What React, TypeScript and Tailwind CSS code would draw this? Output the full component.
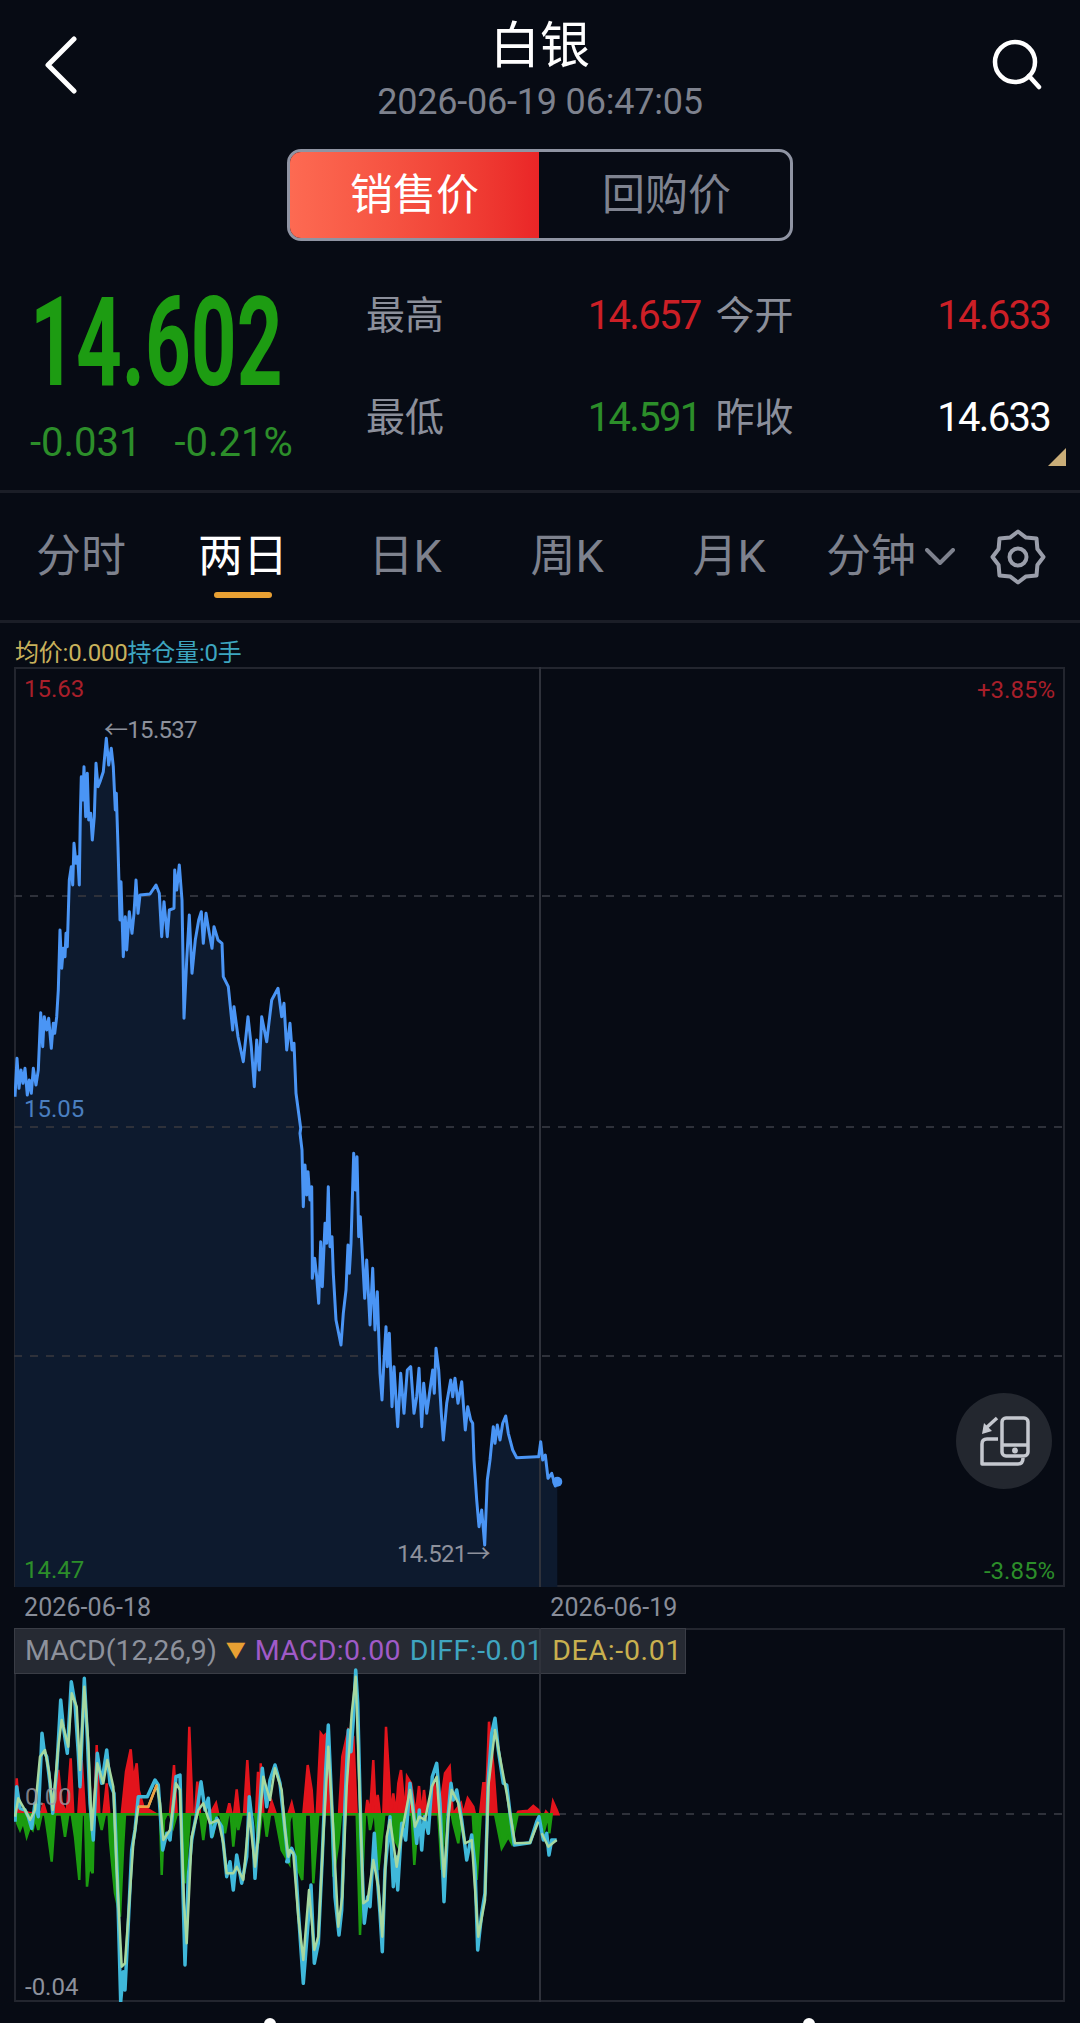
type Pt = [number, number]

// traced from the chart, in 3x crop units, converted to page px below
const toPage = (pts: Pt[], ox: number, oy: number): Pt[] => pts.map(([x, y]) => [ox + x / 3, oy + y / 3])
const str = (pts: Pt[]) => pts.map(([x, y]) => `${x.toFixed(1)},${y.toFixed(1)}`).join(' ')

const priceA: Pt[] = [[15,1100],[21,985],[27,1075],[33,1020],[39,1060],[45,1015],[52,1095],[58,1050],[64,1090],[70,1015],[78,1065],[85,1020],[92,848],[98,950],[103,860],[110,900],[116,865],[124,955],[130,880],[134,910],[140,860],[145,780],[150,600],[155,715],[160,655],[165,680],[168,610],[172,650],[178,450],[184,410],[188,465],[192,340],[198,400],[203,380],[208,465],[211,260],[214,140],[218,210],[222,110],[227,260],[232,130],[236,270],[242,250],[247,330],[253,260],[258,100],[264,170],[270,155],[280,125],[289,25],[296,105],[304,55],[310,110],[316,240],[319,190],[324,350],[330,570],[333,455],[340,680],[346,560],[350,660],[358,545],[366,610],[372,550],[378,450],[384,550],[390,495],[420,492],[438,465],[448,490],[455,620],[462,515],[472,620],[478,540],[492,535],[494,420],[500,480],[508,405],[516,510],[522,865],[530,690],[538,555],[546,730],[556,630],[566,570],[574,545],[580,640],[588,550],[596,600],[606,655],[612,590],[624,630],[636,640],[640,740],[655,770],[668,900],[672,830],[684,920],[700,995],[714,860],[724,950],[733,1070],[740,930],[748,1020],[755,860],[770,935],[785,810],[804,775],[815,860],[822,820],[830,960],[840,880],[846,960],[852,940],[858,1090],[872,1195]]
const priceB: Pt[] = [[60,10],[66,60],[70,230],[75,105],[80,195],[84,125],[90,210],[95,170],[97,355],[97,445],[104,385],[110,440],[116,520],[122,335],[127,470],[135,280],[140,340],[145,170],[150,350],[156,320],[160,430],[168,570],[183,645],[190,550],[198,480],[204,345],[208,430],[213,340],[221,70],[226,180],[231,80],[236,320],[241,260],[247,370],[254,505],[260,390],[270,585],[278,415],[285,600],[292,485],[300,730],[306,810],[312,690],[318,590],[322,710],[328,610],[336,830],[342,710],[353,890],[362,730],[372,850],[382,720],[392,710],[402,850],[410,800],[417,715],[425,890],[431,760],[440,850],[447,800],[458,720],[463,790],[468,655],[476,720],[484,850],[490,930],[500,820],[512,750],[518,800],[525,745],[534,820],[545,755],[550,820],[556,900],[563,830],[572,870],[578,880],[582,990],[590,1110],[597,1190],[605,1140],[614,1245],[622,1050],[630,990],[640,890],[645,940],[652,885],[660,930],[668,880],[677,858],[685,910],[698,960],[710,983],[770,980],[776,980],[782,935],[788,990],[796,975],[804,1045],[815,1030],[826,1068],[832,1055]]
const pricePts = [...toPage(priceA, 10, 730), ...toPage(priceB, 280, 1130)]

const redA: Pt[] = [[15,433],[20,325],[28,420],[60,430],[95,425],[100,400],[110,433],[135,433],[145,300],[155,400],[170,430],[182,265],[190,433],[205,433],[215,270],[225,433],[252,433],[260,225],[268,433],[280,433],[290,340],[298,433],[335,433],[348,305],[362,238],[370,330],[380,280],[386,360],[400,410],[440,433],[480,433],[492,285],[500,433],[530,433],[538,170],[548,433],[555,433],[562,335],[570,433],[600,433],[618,400],[625,433],[650,433],[658,400],[665,433],[672,433],[680,358],[688,433],[702,433],[712,270],[722,433],[738,433],[744,305],[750,433],[752,280],[760,433],[775,433],[785,395],[798,433],[830,433]]
const greenA: Pt[] = [[15,433],[22,460],[30,480],[40,455],[50,500],[60,470],[68,480],[76,445],[85,480],[95,433],[105,433],[115,500],[125,575],[135,433],[155,433],[165,500],[175,433],[185,433],[195,500],[208,630],[215,433],[225,433],[231,650],[238,590],[248,610],[252,433],[265,433],[275,480],[285,433],[296,433],[300,515],[315,670],[330,740],[340,520],[345,433],[450,433],[455,615],[462,450],[470,433],[480,433],[490,470],[500,433],[515,433],[525,640],[540,433],[570,433],[580,510],[590,433],[600,433],[608,500],[620,433],[630,433],[645,490],[655,433],[662,433],[670,530],[680,433],[685,480],[695,433],[735,433],[745,520],[755,433],[762,433],[770,500],[780,433],[795,433],[815,540],[838,580],[838,433]]
const redB: Pt[] = [[10,433],[20,400],[28,433],[55,433],[68,285],[80,360],[85,433],[95,433],[107,190],[115,200],[120,195],[128,300],[135,433],[162,433],[172,260],[190,180],[205,200],[215,433],[242,433],[247,390],[255,433],[265,270],[272,433],[278,375],[285,433],[295,433],[303,170],[312,320],[318,433],[325,370],[333,433],[340,340],[348,300],[360,433],[366,320],[378,340],[392,433],[402,348],[410,433],[417,360],[425,433],[440,433],[446,330],[462,433],[480,310],[494,290],[503,433],[528,400],[535,433],[548,385],[565,410],[570,433],[585,433],[595,340],[605,340],[612,155],[625,290],[635,433],[695,433],[700,425],[730,422],[745,408],[760,420],[765,433],[780,433],[783,425],[790,433],[798,433],[804,395],[815,420],[820,433]]
const greenB: Pt[] = [[0,433],[10,460],[20,433],[25,433],[30,500],[40,600],[52,630],[60,433],[78,433],[85,640],[100,433],[140,433],[145,620],[160,520],[168,433],[215,433],[225,795],[240,433],[250,433],[255,480],[265,433],[270,433],[280,600],[298,433],[315,433],[325,500],[340,530],[365,433],[380,433],[388,585],[400,433],[460,433],[470,600],[480,433],[500,433],[505,460],[520,520],[530,433],[563,433],[575,630],[587,433],[630,433],[650,535],[670,500],[680,520],[698,433],[765,433],[778,480],[790,433],[793,490],[800,433]]
const diffA: Pt[] = [[15,455],[20,350],[30,415],[45,420],[55,440],[65,475],[75,400],[85,440],[96,190],[103,245],[110,260],[120,340],[128,430],[140,300],[152,90],[160,170],[172,250],[184,35],[195,100],[205,250],[210,350],[223,25],[232,200],[240,400],[250,510],[262,250],[275,340],[290,240],[300,340],[312,370],[322,620],[332,995],[340,905],[345,960],[355,760],[365,540],[375,480],[385,380],[412,380],[435,330],[445,345],[458,540],[470,490],[480,510],[498,320],[510,315],[520,700],[525,885],[535,620],[545,510],[560,430],[573,335],[585,420],[595,385],[605,500],[620,445],[635,470],[650,620],[660,575],[670,660],[680,555],[695,640],[710,560],[718,380],[728,470],[735,625],[745,480],[757,295],[770,410],[780,330],[795,285],[810,340],[825,480],[835,575]]
const deaA: Pt[] = [[15,440],[25,385],[45,420],[60,450],[75,420],[90,260],[105,240],[118,310],[128,420],[145,230],[155,150],[175,230],[185,70],[200,110],[210,300],[223,50],[235,220],[245,480],[262,280],[280,340],[292,270],[310,350],[320,600],[335,890],[345,880],[355,740],[370,520],[385,410],[415,410],[440,345],[450,400],[460,510],[480,480],[498,340],[510,360],[522,700],[530,820],[545,500],[565,420],[580,400],[600,460],[625,450],[640,520],[650,610],[670,610],[680,590],[700,630],[718,430],[735,590],[745,500],[760,320],[780,390],[795,295],[815,360],[825,480],[835,560]]
const diffB: Pt[] = [[5,575],[20,535],[30,560],[40,720],[46,810],[55,940],[62,850],[78,645],[88,880],[100,820],[112,560],[122,300],[130,165],[140,400],[150,680],[162,795],[170,720],[180,400],[190,180],[198,245],[205,150],[212,0],[218,100],[228,500],[238,760],[248,680],[255,710],[268,490],[275,600],[285,730],[292,845],[300,600],[315,440],[325,650],[332,560],[338,660],[350,460],[362,510],[375,340],[385,420],[395,520],[403,420],[410,540],[418,440],[430,490],[442,320],[455,280],[465,400],[477,695],[490,430],[498,340],[505,390],[515,360],[530,450],[545,570],[560,495],[570,590],[578,840],[590,730],[600,670],[610,330],[620,190],[630,145],[640,240],[655,340],[665,345],[675,430],[688,525],[735,518],[755,455],[762,440],[775,510],[785,490],[792,555],[800,510],[815,510]]
const deaB: Pt[] = [[15,540],[25,550],[40,740],[55,870],[72,660],[88,840],[100,800],[115,500],[130,230],[145,480],[160,770],[172,680],[185,350],[200,130],[212,20],[225,400],[235,700],[248,690],[265,570],[280,650],[292,800],[305,500],[315,450],[335,590],[352,480],[375,360],[390,470],[403,440],[420,450],[440,350],[455,320],[477,620],[490,440],[500,360],[520,400],[540,520],[560,510],[580,800],[600,690],[610,350],[630,180],[650,290],[665,370],[690,520],[735,518],[760,455]]
const deaC: Pt[] = [[770,490],[790,530],[815,510]]

const chartA = (p: Pt[]) => toPage(p, 10, 1670)
const chartB = (p: Pt[]) => toPage(p, 285, 1670)

const tabs = ['分时', '两日', '日K', '周K', '月K']

function StatCell({ label, value, color }: { label: string; value: string; color: string }) {
  return (
    <div className="flex items-center justify-between">
      <span className="text-[39px] leading-none text-[#8b8f9b]">{label}</span>
      <span className={`text-[40px] leading-none tracking-[-1.7px] ${color}`}>{value}</span>
    </div>
  )
}

export default function App() {
  const areaPts = `${pricePts[0][0].toFixed(1)},1587 ${str(pricePts)} 557.3,1587`

  return (
    <div className="h-[2023px] w-[1080px] overflow-hidden bg-[#070b14] font-[Roboto,'Noto_Sans_CJK_SC',sans-serif]">
      {/* header */}
      <div className="grid h-[149px] grid-cols-[1fr_auto_1fr]">
        <div className="pl-[43px] pt-[36px]">
          <svg width="36" height="58" viewBox="0 0 36 58" fill="none">
            <path d="M31 3 L5 29 L31 55" stroke="#fff" strokeWidth="5" strokeLinecap="round" strokeLinejoin="round" />
          </svg>
        </div>
        <div className="flex flex-col items-center pt-[16px]">
          <div className="text-[50px] leading-[60px] text-white">白银</div>
          <div className="mt-[6px] text-[36px] leading-[40px] tracking-[-0.2px] text-[#7e828e]">2026-06-19 06:47:05</div>
        </div>
        <div className="flex justify-end pr-[37px] pt-[38px]">
          <svg width="52" height="52" viewBox="0 0 52 52" fill="none">
            <circle cx="24" cy="24" r="20" stroke="#fff" strokeWidth="4.5" />
            <path d="M38 38 L48 49" stroke="#fff" strokeWidth="4.5" strokeLinecap="round" />
          </svg>
        </div>
      </div>

      {/* sell / buyback switch */}
      <div className="mx-auto flex h-[92px] w-[506px] overflow-hidden rounded-[14px] border-[3px] border-[#8f94a3]">
        <div className="flex w-[249px] items-center justify-center bg-gradient-to-r from-[#fd6a52] to-[#ea2527] text-[43px] text-white">
          销售价
        </div>
        <div className="flex flex-1 items-center justify-center pl-[4px] text-[43px] text-[#7f8390]">回购价</div>
      </div>

      {/* quote */}
      <div className="relative flex h-[249px] pl-[30px]">
        <div className="w-[336px]">
          <div className="mt-[58px] h-[88px] whitespace-nowrap text-[124px] leading-[88px] font-bold text-[#1d9c12]">
            <span className="inline-block origin-left scale-x-[.645]">14.602</span>
          </div>
          <div className="mt-[33px] flex gap-[33px] text-[40px] leading-[46px] text-[#2c8e2a]">
            <span>-0.031</span>
            <span>-0.21%</span>
          </div>
        </div>
        <div className="mt-[24px] grid h-[204px] w-[684px] grid-cols-2 grid-rows-2 gap-x-[15px]">
          <StatCell label="最高" value="14.657" color="text-[#cc1f26]" />
          <StatCell label="今开" value="14.633" color="text-[#cc1f26]" />
          <StatCell label="最低" value="14.591" color="text-[#2c8e2a]" />
          <StatCell label="昨收" value="14.633" color="text-white" />
        </div>
        <div className="absolute bottom-[24px] right-[14px] h-[18px] w-[18px] bg-[#c9ad78] [clip-path:polygon(100%_0,100%_100%,0_100%)]" />
      </div>

      <div className="h-[3px] bg-[#1b1e27]" />

      {/* period tabs */}
      <div className="flex h-[127px] items-center">
        {tabs.map((t, i) => (
          <div key={t} className={`relative w-[162px] text-center text-[45px] ${i === 1 ? 'text-white' : 'text-[#7e828e]'}`}>
            {t}
            {i === 1 && <div className="absolute bottom-[-8px] left-[52px] h-[6px] w-[58px] rounded-full bg-[#e8a033]" />}
          </div>
        ))}
        <span className="ml-[16px] text-[45px] text-[#7e828e]">分钟</span>
        <svg className="ml-[9px]" width="30" height="18" viewBox="0 0 30 18" fill="none">
          <path d="M2 2 L15 15 L28 2" stroke="#7e828e" strokeWidth="4" strokeLinecap="round" strokeLinejoin="round" />
        </svg>
        <svg className="ml-[36px] overflow-visible" width="54" height="54" viewBox="0 0 54 54" fill="none">
          <path d="M27 1.5 L35 7.6 L45.5 8.5 L46.4 19 L52.5 27 L46.4 35 L45.5 45.5 L35 46.4 L27 52.5 L19 46.4 L8.5 45.5 L7.6 35 L1.5 27 L7.6 19 L8.5 8.5 L19 7.6 Z" stroke="#9a9eaa" strokeWidth="4" strokeLinejoin="round" />
          <circle cx="27" cy="27" r="8.5" stroke="#9a9eaa" strokeWidth="4" />
        </svg>
      </div>

      <div className="h-[3px] bg-[#1b1e27]" />

      {/* legend */}
      <div className="flex h-[44px] items-end pl-[15px] text-[24px] leading-[27px] tracking-[-0.2px]">
        <span className="text-[#c9b25c]">均价:0.000</span>
        <span className="text-[#3da6c0]">持仓量:0手</span>
      </div>

      {/* price chart */}
      <div className="relative ml-[14px] h-[920px] w-[1051px] ring-2 ring-inset ring-[#23262f]">
        <svg className="absolute inset-0" width="1051" height="920" viewBox="14 667 1051 920" fill="none">
          <polygon points={areaPts} fill="#0d1a2e" />
          {[896, 1127, 1356].map((y) => (
            <line key={y} x1="14" x2="1065" y1={y} y2={y} stroke="#2e313a" strokeWidth="2" strokeDasharray="8 8" />
          ))}
          <line x1="540" x2="540" y1="667" y2="1587" stroke="#2f323b" strokeWidth="2" />
          <polyline points={str(pricePts)} stroke="#4a95f5" strokeWidth="3" strokeLinejoin="round" />
          <circle cx="557.3" cy="1481.7" r="5" fill="#4a95f5" />
        </svg>
        <span className="absolute left-[10px] top-[5px] text-[24px] leading-[34px] text-[#a81f2a]">15.63</span>
        <span className="absolute right-[10px] top-[6px] text-[24px] leading-[34px] text-[#a81f2a]">+3.85%</span>
        <span className="absolute left-[90px] top-[46px] text-[24px] leading-[34px] tracking-[-0.7px] text-[#8d919c]">←15.537</span>
        <span className="absolute left-[383px] top-[870px] text-[24px] leading-[34px] tracking-[-0.7px] text-[#8d919c]">14.521→</span>
        <span className="absolute left-[10px] top-[425px] text-[24px] leading-[34px] text-[#4a7fc0]">15.05</span>
        <span className="absolute left-[10px] top-[886px] text-[24px] leading-[34px] text-[#2c8e2a]">14.47</span>
        <span className="absolute right-[10px] top-[887px] text-[24px] leading-[34px] text-[#2c8e2a]">-3.85%</span>
        <div className="absolute left-[942px] top-[726px] flex h-[96px] w-[96px] items-center justify-center rounded-full bg-[#23272f]">
          <svg width="96" height="96" viewBox="0 0 96 96" fill="none" stroke="#c5c8cf" strokeWidth="3.5">
            <rect x="46" y="25" width="26" height="38" rx="4" />
            <path d="M46 52 H72" />
            <circle cx="59" cy="57.5" r="1.2" fill="#c5c8cf" />
            <path d="M42 46 H31 Q26 46 26 51 V71 H62 Q67 71 67 65" strokeLinejoin="round" />
            <path d="M41 25 L30 35" />
            <path d="M26 41 L28 30 L36 38 Z" fill="#c5c8cf" stroke="none" />
          </svg>
        </div>
      </div>

      {/* dates */}
      <div className="flex h-[41px] items-center text-[25px] tracking-[0.1px] text-[#888d99]">
        <span className="ml-[24px]">2026-06-18</span>
        <span className="ml-[399px]">2026-06-19</span>
      </div>

      {/* MACD chart */}
      <div className="relative ml-[14px] h-[374px] w-[1051px] ring-2 ring-inset ring-[#23262f]">
        <div className="flex h-[46px] w-[672px] items-center gap-[9px] border border-[#3a3d46] bg-[#262a33] pl-[10px] text-[28.5px] whitespace-nowrap">
          <span className="text-[#8d919c]">MACD(12,26,9)</span>
          <span className="text-[20px] text-[#e8a033]">▼</span>
          <span className="tracking-[0.3px] text-[#a05ac8]">MACD:0.00</span>
          <span className="tracking-[0.5px] text-[#3fa5c0]">DIFF:-0.01</span>
          <span className="tracking-[0.7px] text-[#c9b04f]">DEA:-0.01</span>
        </div>
        <svg className="absolute inset-0" width="1051" height="374" viewBox="14 1628 1051 374" fill="none">
          <line x1="14" x2="1065" y1="1814" y2="1814" stroke="#2e313a" strokeWidth="2" strokeDasharray="8 8" />
          <line x1="540" x2="540" y1="1628" y2="2002" stroke="#2f323b" strokeWidth="2" />
          <polygon points={str(chartA(redA))} fill="#e3141c" stroke="#e3141c" strokeWidth="2.5" />
          <polygon points={str(chartB(redB))} fill="#e3141c" stroke="#e3141c" strokeWidth="2.5" />
          <polygon points={str(chartA(greenA))} fill="#1b9c10" stroke="#1b9c10" strokeWidth="2.5" />
          <polygon points={str(chartB(greenB))} fill="#1b9c10" stroke="#1b9c10" strokeWidth="2.5" />
          <polyline points={str([...chartA(diffA), ...chartB(diffB)])} stroke="#3fb8da" strokeWidth="3.5" strokeLinejoin="round" />
          <polyline points={str([...chartA(deaA), ...chartB(deaB)])} stroke="#a6d8a0" strokeWidth="2.5" strokeLinejoin="round" />
          <polyline points={str(chartB(deaC))} stroke="#a6d8a0" strokeWidth="2.5" strokeLinejoin="round" />
          <polyline points={str(chartA([[385,410],[415,410],[440,345]]))} stroke="#f0a040" strokeWidth="2.5" />
        </svg>
        <span className="absolute left-[11px] top-[152px] text-[24px] leading-[34px] text-[#9a9da6]/80">0.00</span>
        <span className="absolute left-[11px] top-[342px] text-[24px] leading-[34px] text-[#8d919c]">-0.04</span>
      </div>

      {/* next screen peeking in */}
      <div className="relative h-[21px]">
        <div className="absolute left-[264px] top-[16px] h-[12px] w-[12px] rounded-full bg-white" />
        <div className="absolute left-[803px] top-[16px] h-[12px] w-[12px] rounded-full bg-white" />
      </div>
    </div>
  )
}
